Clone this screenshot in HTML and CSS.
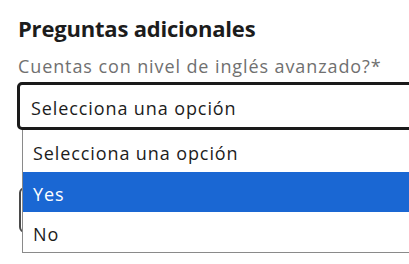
FILE: index.html
```html
<!DOCTYPE html>
<html lang="es">
<head>
    <meta charset="UTF-8">
    <meta name="viewport" content="width=device-width, initial-scale=1.0">
    <title>Preguntas adicionales</title>
    <link rel="stylesheet" href="styles.css">
</head>
<body>

<div class="form">
    <h2 class="title">Preguntas adicionales</h2>

    <div class="question">
        <p class="label">Cuentas con nivel de inglés avanzado?*</p>
        <div class="select-wrap">
            <div class="select focused">Selecciona una opción</div>
            <!-- lista desplegable abierta -->
            <ul class="dropdown">
                <li class="first">Selecciona una opción</li>
                <li class="active">Yes</li>
                <li>No</li>
            </ul>
        </div>
    </div>

    <div class="question next">
        <div class="select"></div>
    </div>
</div>

</body>
</html>
```

FILE: styles.css
```css
    body {
        font-family: "Open Sans", "Noto Sans", Arial, sans-serif;
        margin: 0;
        background-color: #fff;
    }
    .form {
        height: 264px;
        box-sizing: border-box;
        padding: 13px 0 0 17px;
        overflow: hidden;
    }
    .title {
        margin: 0 0 0 1px;
        font-size: 22px;
        font-weight: 700;
        letter-spacing: -0.2px;
        color: #1c1c1c;
        line-height: 30px;
    }
    .label {
        margin: 11px 0 4px 1px;
        font-size: 18px;
        letter-spacing: 0.9px;
        color: #707070;
        line-height: 24px;
    }
    .select-wrap {
        position: relative;
    }
    .select {
        width: 420px;
        height: 46px;
        box-sizing: border-box;
        border: 2px solid #4a4a4a;
        border-radius: 6px;
        padding-left: 11px;
        font-size: 18px;
        letter-spacing: 0.9px;
        color: #1c1c1c;
    }
    .select.focused {
        height: 48px;
        border: 3px solid #1a1a1a;
        border-radius: 5px;
        padding-top: 4px;
        line-height: 38px;
    }
    .dropdown {
        position: absolute;
        top: 48px;
        left: 5px;
        width: 420px;
        margin: 0;
        padding: 0;
        list-style: none;
        background-color: #fff;
        border: 1px solid #8a8a8a;
        border-top: none;
        z-index: 2;
    }
    .dropdown li {
        height: 40px;
        box-sizing: border-box;
        padding: 2px 0 0 10px;
        line-height: 40px;
        font-size: 18px;
        letter-spacing: 0.9px;
        color: #1c1c1c;
    }
    .dropdown li.first {
        height: 42px;
        padding-top: 3px;
    }
    .dropdown li.active {
        background-color: #1a67d3;
        color: #fff;
    }
    .next {
        margin-top: 57px;
    }
    .next .select {
        margin-left: 2px;
    }
```
